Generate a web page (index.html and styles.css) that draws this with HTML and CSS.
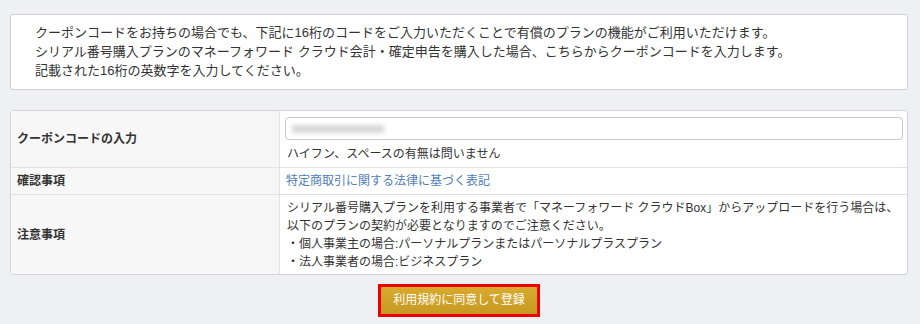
FILE: index.html
```html
<!DOCTYPE html>
<html lang="ja">

<head>
    <meta charset="UTF-8">
    <title>クーポンコードの入力</title>
    <link rel="stylesheet" href="styles.css">
</head>

<body>
    <section class="notice">
        <p>クーポンコードをお持ちの場合でも、下記に16桁のコードをご入力いただくことで有償のプランの機能がご利用いただけます。</p>
        <p>シリアル番号購入プランのマネーフォワード クラウド会計・確定申告を購入した場合、こちらからクーポンコードを入力します。</p>
        <p>記載された16桁の英数字を入力してください。</p>
    </section>

    <table class="form-table">
        <tr class="row-coupon">
            <th>クーポンコードの入力</th>
            <td>
                <div class="code-input"><span class="blurred"></span></div>
                <div class="hint">ハイフン、スペースの有無は問いません</div>
            </td>
        </tr>
        <tr class="row-check">
            <th>確認事項</th>
            <td><a href="#" class="law-link">特定商取引に関する法律に基づく表記</a></td>
        </tr>
        <tr class="row-note">
            <th>注意事項</th>
            <td>
                <div class="line">シリアル番号購入プランを利用する事業者で「マネーフォワード クラウドBox」からアップロードを行う場合は、</div>
                <div class="line">以下のプランの契約が必要となりますのでご注意ください。</div>
                <div class="line">・個人事業主の場合:パーソナルプランまたはパーソナルプラスプラン</div>
                <div class="line">・法人事業者の場合:ビジネスプラン</div>
            </td>
        </tr>
    </table>

    <div class="actions">
        <button class="submit">利用規約に同意して登録</button>
    </div>
</body>

</html>
```

FILE: styles.css
```css
body {
    background-color: #eef0f3;
    margin: 14px 12px 0 10px;
    font-family: "Liberation Sans", "Noto Sans CJK JP", sans-serif;
    font-size: 13px;
    color: #333;
}

.notice {
    background-color: white;
    border: 1px solid #cfcfcf;
    border-radius: 3px;
    padding: 8px 24px 9px;
    line-height: 19px;
}

.notice p {
    margin: 0;
}

.form-table {
    margin-top: 20px;
    width: 100%;
    table-layout: fixed;
    border-collapse: separate;
    border-spacing: 0;
    background-color: white;
    border: 1px solid #d4d4d4;
    border-radius: 3px;
    font-size: 12px;
    line-height: 18px;
}

.form-table th,
.form-table td {
    border-top: 1px solid #e2e2e2;
    vertical-align: middle;
    text-align: left;
}

.form-table tr:first-child th,
.form-table tr:first-child td {
    border-top: none;
}

.form-table th {
    width: 256px;
    background-color: #f7f7f7;
    border-right: 1px solid #e2e2e2;
    font-weight: bold;
    padding: 4px 6px;
}

.form-table td {
    padding: 4px 6px;
}

.row-coupon td {
    padding: 6px 4px 4px 5px;
}

.code-input {
    height: 21px;
    border: 1px solid #c8c8c8;
    border-radius: 4px;
    display: flex;
    align-items: center;
    padding-left: 6px;
}

.blurred {
    width: 92px;
    height: 8px;
    background-color: #d8d8d8;
    filter: blur(2px);
}

.hint {
    margin-top: 5px;
    padding-left: 2px;
}

.row-check td,
.row-check th {
    height: 18px;
}

.law-link {
    color: #4f7db8;
    text-decoration: none;
}

.row-note td {
    padding: 4px 7px 3px;
}

.row-note .line {
    white-space: nowrap;
}

.actions {
    display: flex;
    justify-content: center;
    margin-top: 9px;
}

.submit {
    font-family: inherit;
    font-size: 12px;
    color: white;
    background: linear-gradient(#d8aa2e, #c69a22);
    border: 3px solid #ee0000;
    padding: 3px 12px 4px;
    line-height: 20px;
}
```
